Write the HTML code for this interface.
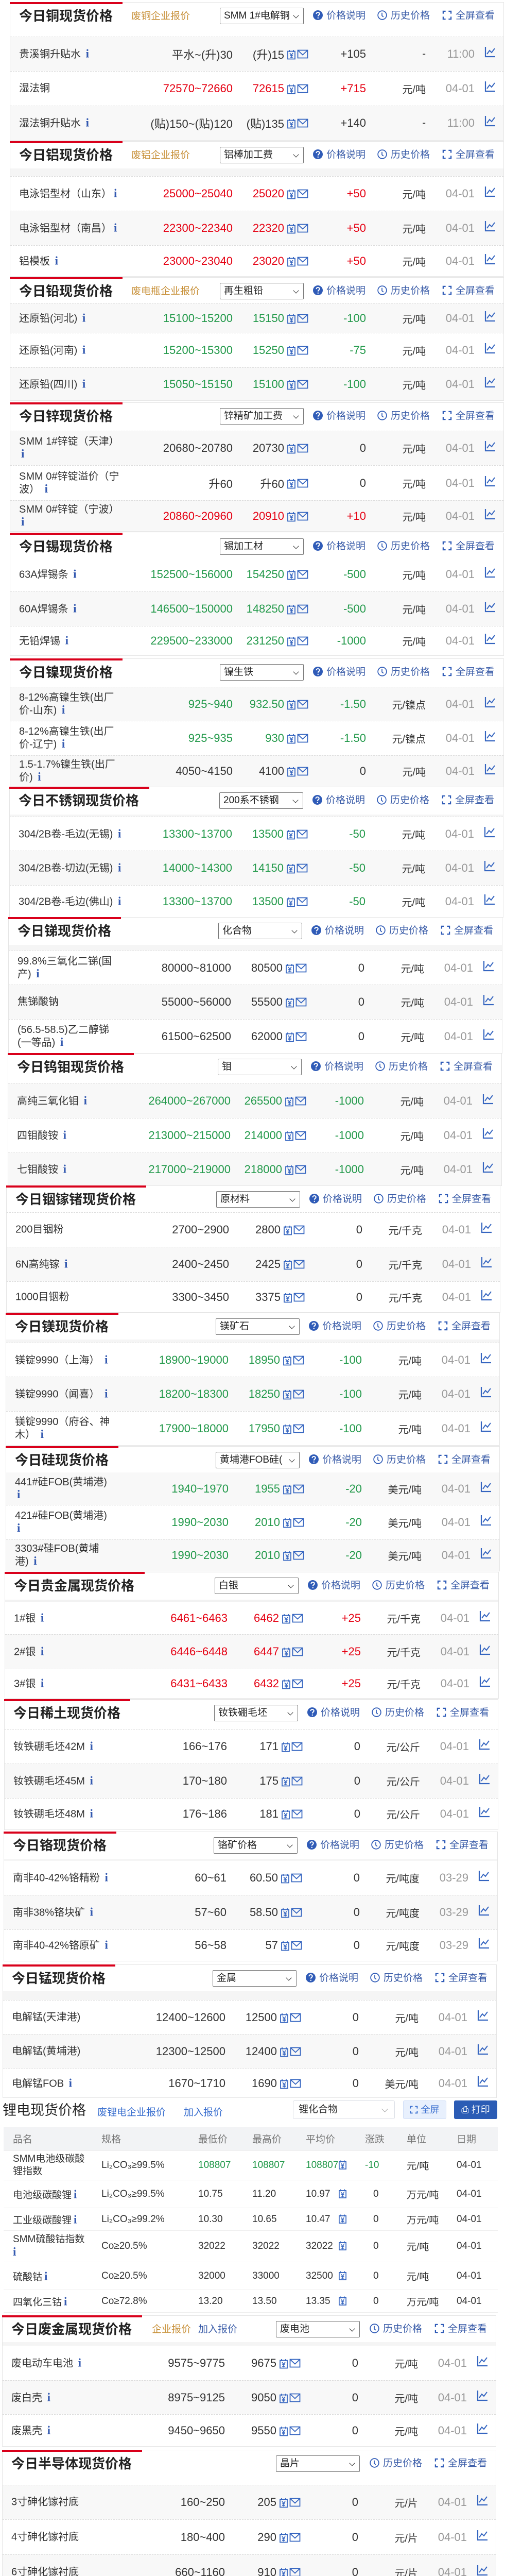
<!DOCTYPE html>
<html><head><meta charset="utf-8">
<style>
*{box-sizing:border-box}
html,body{margin:0;width:981px;height:5028px;overflow:hidden}
body{position:relative;background:#fff;font-family:"Liberation Sans","Noto Sans CJK SC",sans-serif;color:#333}
.s{position:absolute;width:960px;border:1px solid #e6e6e6;border-top:none;background:#fff}
.h{position:relative;border-top:1px solid #e6e6e6}
.bar{position:absolute;left:-1px;top:-1px;height:4px;background:#d9001b}
.t{position:absolute;left:17px;top:11px;font-weight:bold;font-size:26px;line-height:30px;color:#222;white-space:nowrap}
.sub{position:absolute;left:235px;top:15px;font-size:19px;line-height:24px;color:#c8913a;white-space:nowrap}
.sub b{font-weight:normal;color:#3a5ca8;margin-left:14px}
.sel{position:absolute;left:407px;top:10px;width:163px;height:32px;border:1px solid #767676;border-radius:2px;font-size:19px;line-height:30px;padding-left:7px;color:#222;white-space:nowrap;overflow:hidden;background:#fff}
.sel:after{content:"";position:absolute;right:10px;top:10px;width:7px;height:7px;border-right:1.6px solid #333;border-bottom:1.6px solid #333;transform:rotate(45deg)}
.sel span{display:block;width:130px;overflow:hidden}
.lk{position:absolute;top:14px;font-size:19px;line-height:24px;color:#3a5ca8;white-space:nowrap}
.lk svg{width:19px;height:19px;vertical-align:-3px;margin-right:7px}
.st{background:#f5f5f5}
.r{position:relative;border-top:1px dashed #dcdcdc}
.g{background:#f8f8f8}
.r p{position:absolute;margin:0;top:50%;transform:translateY(-50%);white-space:nowrap;font-size:22px}
.r p.n{left:17px;width:205px;white-space:normal;font-size:20px;line-height:23px}
i{font-style:normal;font-family:"Liberation Serif",serif;font-weight:bold;color:#3359b0;font-size:23px;margin-left:4px}
.a{right:526px}.v{right:426px}.c{right:267px}.u{right:151px;font-size:20px!important}.d{right:56px;color:#999}
.R .a,.R .v,.R .c{color:#e50012}
.G .a,.G .v,.G .c{color:#22994a}
.r svg{position:absolute;top:50%}
.y{left:537px;width:18px;height:20px;margin-top:-9px}
.m{left:557px;width:22px;height:18px;margin-top:-9px}
.k{left:921px;width:22px;height:22px;margin-top:-15px}
.li{position:absolute;left:4px;top:4071px;width:963px;height:418px}
.li .lt{position:absolute;left:1px;top:9px;font-size:27px;line-height:32px;color:#222}
.li .l1{position:absolute;left:185px;top:14px;font-size:19px;color:#3a6fcf}
.li .l2{position:absolute;left:353px;top:14px;font-size:19px;color:#3a6fcf}
.li .ls{position:absolute;left:565px;top:6px;width:198px;height:36px;border:1px solid #dcdfe6;border-radius:3px;font-size:19px;line-height:34px;padding-left:10px;color:#333}
.li .ls:after{content:"";position:absolute;right:14px;top:11px;width:8px;height:8px;border-right:1px solid #aaa;border-bottom:1px solid #aaa;transform:rotate(45deg)}
.li .fb{position:absolute;left:779px;top:6px;width:84px;height:36px;background:#e8f0fd;border:1px solid #d0def7;border-radius:3px;color:#3a6fcf;font-size:18px;line-height:34px;text-align:center}
.li .pb{position:absolute;left:878px;top:6px;width:84px;height:36px;background:#2b5cb5;border-radius:3px;color:#fff;font-size:18px;line-height:36px;text-align:center}
.tb{position:absolute;left:3px;top:57px;width:960px}
.tr{position:relative;border-bottom:1px solid #eee}
.tr p{position:absolute;margin:0;top:50%;transform:translateY(-50%);white-space:nowrap;font-size:19px}
.th{background:#f2f3f5;height:47px}.th p{color:#777}
.tr p.n1{left:18px;width:145px;white-space:normal;line-height:24px}
.c1{left:18px}.c2{left:190px}.c3{left:378px}.c4{left:483px}.c5{left:587px}.c6{left:702px}.c7{left:783px}.c8{left:880px}
.gr{color:#22994a}
.tr svg{position:absolute;top:50%;left:650px;width:17px;height:20px;margin-top:-11px}
</style></head><body>
<svg width="0" height="0" style="position:absolute">
<defs>
<symbol id="y" viewBox="0 0 18 20"><path d="M2 3.5h14v15H2z M5 1v4 M13 1v4" fill="none" stroke="#3565c0" stroke-width="1.8"/><path d="M6 7l3 4 3-4 M9 11v6 M6 12h6 M6 15h6" fill="none" stroke="#3565c0" stroke-width="1.6"/></symbol>
<symbol id="m" viewBox="0 0 22 18"><path d="M1.5 1.5h19v15h-19z M1.5 1.5l9.5 9 9.5-9" fill="none" stroke="#3565c0" stroke-width="1.8"/></symbol>
<symbol id="k" viewBox="0 0 22 22"><path d="M2 1v19h19" fill="none" stroke="#3565c0" stroke-width="2.2"/><path d="M5 15l5-7 4 4 6-8" fill="none" stroke="#3565c0" stroke-width="2"/></symbol>
<symbol id="q" viewBox="0 0 20 20"><circle cx="10" cy="10" r="10" fill="#2f5bb7"/><path d="M6.8 7.5c0-2 1.5-3.3 3.3-3.3s3.3 1.2 3.3 3c0 2.4-3 2.4-3 5" fill="none" stroke="#fff" stroke-width="2.2"/><circle cx="10.3" cy="15.6" r="1.3" fill="#fff"/></symbol>
<symbol id="cl" viewBox="0 0 20 20"><circle cx="10" cy="10" r="8.8" fill="none" stroke="#2f5bb7" stroke-width="1.8"/><path d="M9.5 5v6l3 2.5" fill="none" stroke="#2f5bb7" stroke-width="1.8"/></symbol>
<symbol id="fs" viewBox="0 0 20 20"><path d="M2 7V2h5 M13 2h5v5 M18 13v5h-5 M7 18H2v-5" fill="none" stroke="#2f5bb7" stroke-width="2.4"/></symbol>
</defs></svg>

<div class="s" style="left:19px;top:4px">
<div class="h" style="height:67px"><div class="bar" style="width:219px"></div><div class="t">今日铜现货价格</div><div class="sub">废铜企业报价</div><div class="sel"><span>SMM 1#电解铜</span></div><div class="lk" style="left:588px"><svg><use href="#q"/></svg>价格说明</div><div class="lk" style="left:713px"><svg><use href="#cl"/></svg>历史价格</div><div class="lk" style="left:839px"><svg><use href="#fs"/></svg>全屏查看</div></div>
<div class="r g" style="height:67px"><p class="n">贵溪铜升贴水 <i>i</i></p><p class="a">平水~(升)30</p><p class="v">(升)15</p><svg class="y"><use href="#y"/></svg><svg class="m"><use href="#m"/></svg><p class="c">+105</p><p class="u">-</p><p class="d">11:00</p><svg class="k"><use href="#k"/></svg></div>
<div class="r R" style="height:67px"><p class="n">湿法铜</p><p class="a">72570~72660</p><p class="v">72615</p><svg class="y"><use href="#y"/></svg><svg class="m"><use href="#m"/></svg><p class="c">+715</p><p class="u">元/吨</p><p class="d">04-01</p><svg class="k"><use href="#k"/></svg></div>
<div class="r g" style="height:67px"><p class="n">湿法铜升贴水 <i>i</i></p><p class="a">(贴)150~(贴)120</p><p class="v">(贴)135</p><svg class="y"><use href="#y"/></svg><svg class="m"><use href="#m"/></svg><p class="c">+140</p><p class="u">-</p><p class="d">11:00</p><svg class="k"><use href="#k"/></svg></div>
</div>

<div class="s" style="left:19px;top:274px">
<div class="h" style="height:53px"><div class="bar" style="width:219px"></div><div class="t">今日铝现货价格</div><div class="sub">废铝企业报价</div><div class="sel"><span>铝棒加工费</span></div><div class="lk" style="left:588px"><svg><use href="#q"/></svg>价格说明</div><div class="lk" style="left:713px"><svg><use href="#cl"/></svg>历史价格</div><div class="lk" style="left:839px"><svg><use href="#fs"/></svg>全屏查看</div></div>
<div class="st" style="height:15px"></div>
<div class="r R" style="height:67px"><p class="n">电泳铝型材（山东）<i>i</i></p><p class="a">25000~25040</p><p class="v">25020</p><svg class="y"><use href="#y"/></svg><svg class="m"><use href="#m"/></svg><p class="c">+50</p><p class="u">元/吨</p><p class="d">04-01</p><svg class="k"><use href="#k"/></svg></div>
<div class="r R g" style="height:67px"><p class="n">电泳铝型材（南昌）<i>i</i></p><p class="a">22300~22340</p><p class="v">22320</p><svg class="y"><use href="#y"/></svg><svg class="m"><use href="#m"/></svg><p class="c">+50</p><p class="u">元/吨</p><p class="d">04-01</p><svg class="k"><use href="#k"/></svg></div>
<div class="r R" style="height:60px"><p class="n">铝模板 <i>i</i></p><p class="a">23000~23040</p><p class="v">23020</p><svg class="y"><use href="#y"/></svg><svg class="m"><use href="#m"/></svg><p class="c">+50</p><p class="u">元/吨</p><p class="d">04-01</p><svg class="k"><use href="#k"/></svg></div>
</div>

<div class="s" style="left:19px;top:538px">
<div class="h" style="height:51px"><div class="bar" style="width:219px"></div><div class="t">今日铅现货价格</div><div class="sub">废电瓶企业报价</div><div class="sel"><span>再生粗铅</span></div><div class="lk" style="left:588px"><svg><use href="#q"/></svg>价格说明</div><div class="lk" style="left:713px"><svg><use href="#cl"/></svg>历史价格</div><div class="lk" style="left:839px"><svg><use href="#fs"/></svg>全屏查看</div></div>
<div class="r G g" style="height:57px"><p class="n">还原铅(河北) <i>i</i></p><p class="a">15100~15200</p><p class="v">15150</p><svg class="y"><use href="#y"/></svg><svg class="m"><use href="#m"/></svg><p class="c">-100</p><p class="u">元/吨</p><p class="d">04-01</p><svg class="k"><use href="#k"/></svg></div>
<div class="r G" style="height:67px"><p class="n">还原铅(河南) <i>i</i></p><p class="a">15200~15300</p><p class="v">15250</p><svg class="y"><use href="#y"/></svg><svg class="m"><use href="#m"/></svg><p class="c">-75</p><p class="u">元/吨</p><p class="d">04-01</p><svg class="k"><use href="#k"/></svg></div>
<div class="r G g" style="height:64px"><p class="n">还原铅(四川) <i>i</i></p><p class="a">15050~15150</p><p class="v">15100</p><svg class="y"><use href="#y"/></svg><svg class="m"><use href="#m"/></svg><p class="c">-100</p><p class="u">元/吨</p><p class="d">04-01</p><svg class="k"><use href="#k"/></svg></div>
</div>

<div class="s" style="left:19px;top:781px">
<div class="h" style="height:55px"><div class="bar" style="width:219px"></div><div class="t">今日锌现货价格</div><div class="sel"><span>锌精矿加工费</span></div><div class="lk" style="left:588px"><svg><use href="#q"/></svg>价格说明</div><div class="lk" style="left:713px"><svg><use href="#cl"/></svg>历史价格</div><div class="lk" style="left:839px"><svg><use href="#fs"/></svg>全屏查看</div></div>
<div class="r g" style="height:67px"><p class="n">SMM 1#锌锭（天津） <i>i</i></p><p class="a">20680~20780</p><p class="v">20730</p><svg class="y"><use href="#y"/></svg><svg class="m"><use href="#m"/></svg><p class="c">0</p><p class="u">元/吨</p><p class="d">04-01</p><svg class="k"><use href="#k"/></svg></div>
<div class="r" style="height:68px"><p class="n">SMM 0#锌锭溢价（宁波） <i>i</i></p><p class="a">升60</p><p class="v">升60</p><svg class="y"><use href="#y"/></svg><svg class="m"><use href="#m"/></svg><p class="c">0</p><p class="u">元/吨</p><p class="d">04-01</p><svg class="k"><use href="#k"/></svg></div>
<div class="r R g" style="height:60px"><p class="n">SMM 0#锌锭（宁波） <i>i</i></p><p class="a">20860~20960</p><p class="v">20910</p><svg class="y"><use href="#y"/></svg><svg class="m"><use href="#m"/></svg><p class="c">+10</p><p class="u">元/吨</p><p class="d">04-01</p><svg class="k"><use href="#k"/></svg></div>
</div>

<div class="s" style="left:19px;top:1034px">
<div class="h" style="height:47px"><div class="bar" style="width:219px"></div><div class="t">今日锡现货价格</div><div class="sel"><span>锡加工材</span></div><div class="lk" style="left:588px"><svg><use href="#q"/></svg>价格说明</div><div class="lk" style="left:713px"><svg><use href="#cl"/></svg>历史价格</div><div class="lk" style="left:839px"><svg><use href="#fs"/></svg>全屏查看</div></div>
<div class="r G" style="height:67px;border-top:none"><p class="n">63A焊锡条 <i>i</i></p><p class="a">152500~156000</p><p class="v">154250</p><svg class="y"><use href="#y"/></svg><svg class="m"><use href="#m"/></svg><p class="c">-500</p><p class="u">元/吨</p><p class="d">04-01</p><svg class="k"><use href="#k"/></svg></div>
<div class="r G g" style="height:67px"><p class="n">60A焊锡条 <i>i</i></p><p class="a">146500~150000</p><p class="v">148250</p><svg class="y"><use href="#y"/></svg><svg class="m"><use href="#m"/></svg><p class="c">-500</p><p class="u">元/吨</p><p class="d">04-01</p><svg class="k"><use href="#k"/></svg></div>
<div class="r G" style="height:57px"><p class="n">无铅焊锡 <i>i</i></p><p class="a">229500~233000</p><p class="v">231250</p><svg class="y"><use href="#y"/></svg><svg class="m"><use href="#m"/></svg><p class="c">-1000</p><p class="u">元/吨</p><p class="d">04-01</p><svg class="k"><use href="#k"/></svg></div>
</div>

<div class="s" style="left:19px;top:1278px">
<div class="h" style="height:55px"><div class="bar" style="width:219px"></div><div class="t">今日镍现货价格</div><div class="sel"><span>镍生铁</span></div><div class="lk" style="left:588px"><svg><use href="#q"/></svg>价格说明</div><div class="lk" style="left:713px"><svg><use href="#cl"/></svg>历史价格</div><div class="lk" style="left:839px"><svg><use href="#fs"/></svg>全屏查看</div></div>
<div class="r G g" style="height:66px"><p class="n" style="width:190px">8-12%高镍生铁(出厂价-山东) <i>i</i></p><p class="a">925~940</p><p class="v">932.50</p><svg class="y"><use href="#y"/></svg><svg class="m"><use href="#m"/></svg><p class="c">-1.50</p><p class="u">元/镍点</p><p class="d">04-01</p><svg class="k"><use href="#k"/></svg></div>
<div class="r G" style="height:67px"><p class="n" style="width:190px">8-12%高镍生铁(出厂价-辽宁) <i>i</i></p><p class="a">925~935</p><p class="v">930</p><svg class="y"><use href="#y"/></svg><svg class="m"><use href="#m"/></svg><p class="c">-1.50</p><p class="u">元/镍点</p><p class="d">04-01</p><svg class="k"><use href="#k"/></svg></div>
<div class="r g" style="height:61px"><p class="n" style="width:190px">1.5-1.7%镍生铁(出厂价) <i>i</i></p><p class="a">4050~4150</p><p class="v">4100</p><svg class="y"><use href="#y"/></svg><svg class="m"><use href="#m"/></svg><p class="c">0</p><p class="u">元/吨</p><p class="d">04-01</p><svg class="k"><use href="#k"/></svg></div>
</div>

<div class="s" style="left:18px;top:1527px">
<div class="h" style="height:54px"><div class="bar" style="width:272px"></div><div class="t">今日不锈钢现货价格</div><div class="sel"><span>200系不锈钢</span></div><div class="lk" style="left:588px"><svg><use href="#q"/></svg>价格说明</div><div class="lk" style="left:713px"><svg><use href="#cl"/></svg>历史价格</div><div class="lk" style="left:839px"><svg><use href="#fs"/></svg>全屏查看</div></div>
<div class="st" style="height:4px"></div>
<div class="r G" style="height:66px"><p class="n">304/2B卷-毛边(无锡) <i>i</i></p><p class="a">13300~13700</p><p class="v">13500</p><svg class="y"><use href="#y"/></svg><svg class="m"><use href="#m"/></svg><p class="c">-50</p><p class="u">元/吨</p><p class="d">04-01</p><svg class="k"><use href="#k"/></svg></div>
<div class="r G g" style="height:67px"><p class="n">304/2B卷-切边(无锡) <i>i</i></p><p class="a">14000~14300</p><p class="v">14150</p><svg class="y"><use href="#y"/></svg><svg class="m"><use href="#m"/></svg><p class="c">-50</p><p class="u">元/吨</p><p class="d">04-01</p><svg class="k"><use href="#k"/></svg></div>
<div class="r G" style="height:62px"><p class="n">304/2B卷-毛边(佛山) <i>i</i></p><p class="a">13300~13700</p><p class="v">13500</p><svg class="y"><use href="#y"/></svg><svg class="m"><use href="#m"/></svg><p class="c">-50</p><p class="u">元/吨</p><p class="d">04-01</p><svg class="k"><use href="#k"/></svg></div>
</div>

<div class="s" style="left:16px;top:1780px">
<div class="h" style="height:54px"><div class="bar" style="width:219px"></div><div class="t">今日锑现货价格</div><div class="sel"><span>化合物</span></div><div class="lk" style="left:588px"><svg><use href="#q"/></svg>价格说明</div><div class="lk" style="left:713px"><svg><use href="#cl"/></svg>历史价格</div><div class="lk" style="left:839px"><svg><use href="#fs"/></svg>全屏查看</div></div>
<div class="st" style="height:11px"></div>
<div class="r" style="height:66px"><p class="n" style="width:190px">99.8%三氧化二锑(国产) <i>i</i></p><p class="a">80000~81000</p><p class="v">80500</p><svg class="y"><use href="#y"/></svg><svg class="m"><use href="#m"/></svg><p class="c">0</p><p class="u">元/吨</p><p class="d">04-01</p><svg class="k"><use href="#k"/></svg></div>
<div class="r g" style="height:67px"><p class="n">焦锑酸钠</p><p class="a">55000~56000</p><p class="v">55500</p><svg class="y"><use href="#y"/></svg><svg class="m"><use href="#m"/></svg><p class="c">0</p><p class="u">元/吨</p><p class="d">04-01</p><svg class="k"><use href="#k"/></svg></div>
<div class="r" style="height:66px"><p class="n" style="width:185px">(56.5-58.5)乙二醇锑(一等品) <i>i</i></p><p class="a">61500~62500</p><p class="v">62000</p><svg class="y"><use href="#y"/></svg><svg class="m"><use href="#m"/></svg><p class="c">0</p><p class="u">元/吨</p><p class="d">04-01</p><svg class="k"><use href="#k"/></svg></div>
</div>

<div class="s" style="left:15px;top:2044px">
<div class="h" style="height:59px"><div class="bar" style="width:245px"></div><div class="t">今日钨钼现货价格</div><div class="sel"><span>钼</span></div><div class="lk" style="left:588px"><svg><use href="#q"/></svg>价格说明</div><div class="lk" style="left:713px"><svg><use href="#cl"/></svg>历史价格</div><div class="lk" style="left:839px"><svg><use href="#fs"/></svg>全屏查看</div></div>
<div class="r G g" style="height:67px"><p class="n">高纯三氧化钼 <i>i</i></p><p class="a">264000~267000</p><p class="v">265500</p><svg class="y"><use href="#y"/></svg><svg class="m"><use href="#m"/></svg><p class="c">-1000</p><p class="u">元/吨</p><p class="d">04-01</p><svg class="k"><use href="#k"/></svg></div>
<div class="r G" style="height:67px"><p class="n">四钼酸铵 <i>i</i></p><p class="a">213000~215000</p><p class="v">214000</p><svg class="y"><use href="#y"/></svg><svg class="m"><use href="#m"/></svg><p class="c">-1000</p><p class="u">元/吨</p><p class="d">04-01</p><svg class="k"><use href="#k"/></svg></div>
<div class="r G g" style="height:64px"><p class="n">七钼酸铵 <i>i</i></p><p class="a">217000~219000</p><p class="v">218000</p><svg class="y"><use href="#y"/></svg><svg class="m"><use href="#m"/></svg><p class="c">-1000</p><p class="u">元/吨</p><p class="d">04-01</p><svg class="k"><use href="#k"/></svg></div>
</div>

<div class="s" style="left:12px;top:2301px">
<div class="h" style="height:52px"><div class="bar" style="width:272px"></div><div class="t">今日铟镓锗现货价格</div><div class="sel"><span>原材料</span></div><div class="lk" style="left:588px"><svg><use href="#q"/></svg>价格说明</div><div class="lk" style="left:713px"><svg><use href="#cl"/></svg>历史价格</div><div class="lk" style="left:839px"><svg><use href="#fs"/></svg>全屏查看</div></div>
<div class="r" style="height:67px"><p class="n">200目铟粉</p><p class="a">2700~2900</p><p class="v">2800</p><svg class="y"><use href="#y"/></svg><svg class="m"><use href="#m"/></svg><p class="c">0</p><p class="u">元/千克</p><p class="d">04-01</p><svg class="k"><use href="#k"/></svg></div>
<div class="r g" style="height:67px"><p class="n">6N高纯镓 <i>i</i></p><p class="a">2400~2450</p><p class="v">2425</p><svg class="y"><use href="#y"/></svg><svg class="m"><use href="#m"/></svg><p class="c">0</p><p class="u">元/千克</p><p class="d">04-01</p><svg class="k"><use href="#k"/></svg></div>
<div class="r" style="height:60px"><p class="n">1000目铟粉</p><p class="a">3300~3450</p><p class="v">3375</p><svg class="y"><use href="#y"/></svg><svg class="m"><use href="#m"/></svg><p class="c">0</p><p class="u">元/千克</p><p class="d">04-01</p><svg class="k"><use href="#k"/></svg></div>
</div>

<div class="s" style="left:11px;top:2548px">
<div class="h" style="height:52px"><div class="bar" style="width:219px"></div><div class="t">今日镁现货价格</div><div class="sel"><span>镁矿石</span></div><div class="lk" style="left:588px"><svg><use href="#q"/></svg>价格说明</div><div class="lk" style="left:713px"><svg><use href="#cl"/></svg>历史价格</div><div class="lk" style="left:839px"><svg><use href="#fs"/></svg>全屏查看</div></div>
<div class="st" style="height:6px"></div>
<div class="r G" style="height:66px"><p class="n">镁锭9990（上海） <i>i</i></p><p class="a">18900~19000</p><p class="v">18950</p><svg class="y"><use href="#y"/></svg><svg class="m"><use href="#m"/></svg><p class="c">-100</p><p class="u">元/吨</p><p class="d">04-01</p><svg class="k"><use href="#k"/></svg></div>
<div class="r G g" style="height:67px"><p class="n">镁锭9990（闻喜） <i>i</i></p><p class="a">18200~18300</p><p class="v">18250</p><svg class="y"><use href="#y"/></svg><svg class="m"><use href="#m"/></svg><p class="c">-100</p><p class="u">元/吨</p><p class="d">04-01</p><svg class="k"><use href="#k"/></svg></div>
<div class="r G" style="height:66px"><p class="n" style="width:190px">镁锭9990（府谷、神木） <i>i</i></p><p class="a">17900~18000</p><p class="v">17950</p><svg class="y"><use href="#y"/></svg><svg class="m"><use href="#m"/></svg><p class="c">-100</p><p class="u">元/吨</p><p class="d">04-01</p><svg class="k"><use href="#k"/></svg></div>
</div>

<div class="s" style="left:11px;top:2807px">
<div class="h" style="height:51px"><div class="bar" style="width:219px"></div><div class="t">今日硅现货价格</div><div class="sel"><span>黄埔港FOB硅(</span></div><div class="lk" style="left:588px"><svg><use href="#q"/></svg>价格说明</div><div class="lk" style="left:713px"><svg><use href="#cl"/></svg>历史价格</div><div class="lk" style="left:839px"><svg><use href="#fs"/></svg>全屏查看</div></div>
<div class="r G g" style="height:63px;border-top:none"><p class="n" style="width:190px">441#硅FOB(黄埔港) <i>i</i></p><p class="a">1940~1970</p><p class="v">1955</p><svg class="y"><use href="#y"/></svg><svg class="m"><use href="#m"/></svg><p class="c">-20</p><p class="u">美元/吨</p><p class="d">04-01</p><svg class="k"><use href="#k"/></svg></div>
<div class="r G" style="height:67px"><p class="n" style="width:190px">421#硅FOB(黄埔港) <i>i</i></p><p class="a">1990~2030</p><p class="v">2010</p><svg class="y"><use href="#y"/></svg><svg class="m"><use href="#m"/></svg><p class="c">-20</p><p class="u">美元/吨</p><p class="d">04-01</p><svg class="k"><use href="#k"/></svg></div>
<div class="r G g" style="height:61px"><p class="n" style="width:190px">3303#硅FOB(黄埔港) <i>i</i></p><p class="a">1990~2030</p><p class="v">2010</p><svg class="y"><use href="#y"/></svg><svg class="m"><use href="#m"/></svg><p class="c">-20</p><p class="u">美元/吨</p><p class="d">04-01</p><svg class="k"><use href="#k"/></svg></div>
</div>

<div class="s" style="left:9px;top:3051px">
<div class="h" style="height:54px"><div class="bar" style="width:272px"></div><div class="t">今日贵金属现货价格</div><div class="sel"><span>白银</span></div><div class="lk" style="left:588px"><svg><use href="#q"/></svg>价格说明</div><div class="lk" style="left:713px"><svg><use href="#cl"/></svg>历史价格</div><div class="lk" style="left:839px"><svg><use href="#fs"/></svg>全屏查看</div></div>
<div class="r R" style="height:67px;border-top:4px solid #f2f2f2"><p class="n">1#银 <i>i</i></p><p class="a">6461~6463</p><p class="v">6462</p><svg class="y"><use href="#y"/></svg><svg class="m"><use href="#m"/></svg><p class="c">+25</p><p class="u">元/千克</p><p class="d">04-01</p><svg class="k"><use href="#k"/></svg></div>
<div class="r R g" style="height:67px"><p class="n">2#银 <i>i</i></p><p class="a">6446~6448</p><p class="v">6447</p><svg class="y"><use href="#y"/></svg><svg class="m"><use href="#m"/></svg><p class="c">+25</p><p class="u">元/千克</p><p class="d">04-01</p><svg class="k"><use href="#k"/></svg></div>
<div class="r R" style="height:57px"><p class="n">3#银 <i>i</i></p><p class="a">6431~6433</p><p class="v">6432</p><svg class="y"><use href="#y"/></svg><svg class="m"><use href="#m"/></svg><p class="c">+25</p><p class="u">元/千克</p><p class="d">04-01</p><svg class="k"><use href="#k"/></svg></div>
</div>

<div class="s" style="left:8px;top:3298px">
<div class="h" style="height:58px"><div class="bar" style="width:245px"></div><div class="t">今日稀土现货价格</div><div class="sel"><span>钕铁硼毛坯</span></div><div class="lk" style="left:588px"><svg><use href="#q"/></svg>价格说明</div><div class="lk" style="left:713px"><svg><use href="#cl"/></svg>历史价格</div><div class="lk" style="left:839px"><svg><use href="#fs"/></svg>全屏查看</div></div>
<div class="r" style="height:67px"><p class="n">钕铁硼毛坯42M <i>i</i></p><p class="a">166~176</p><p class="v">171</p><svg class="y"><use href="#y"/></svg><svg class="m"><use href="#m"/></svg><p class="c">0</p><p class="u">元/公斤</p><p class="d">04-01</p><svg class="k"><use href="#k"/></svg></div>
<div class="r g" style="height:67px"><p class="n">钕铁硼毛坯45M <i>i</i></p><p class="a">170~180</p><p class="v">175</p><svg class="y"><use href="#y"/></svg><svg class="m"><use href="#m"/></svg><p class="c">0</p><p class="u">元/公斤</p><p class="d">04-01</p><svg class="k"><use href="#k"/></svg></div>
<div class="r" style="height:61px"><p class="n">钕铁硼毛坯48M <i>i</i></p><p class="a">176~186</p><p class="v">181</p><svg class="y"><use href="#y"/></svg><svg class="m"><use href="#m"/></svg><p class="c">0</p><p class="u">元/公斤</p><p class="d">04-01</p><svg class="k"><use href="#k"/></svg></div>
</div>

<div class="s" style="left:7px;top:3555px">
<div class="h" style="height:53px"><div class="bar" style="width:219px"></div><div class="t">今日铬现货价格</div><div class="sel"><span>铬矿价格</span></div><div class="lk" style="left:588px"><svg><use href="#q"/></svg>价格说明</div><div class="lk" style="left:713px"><svg><use href="#cl"/></svg>历史价格</div><div class="lk" style="left:839px"><svg><use href="#fs"/></svg>全屏查看</div></div>
<div class="st" style="height:4px"></div>
<div class="r" style="height:66px;border-top:none"><p class="n">南非40-42%铬精粉 <i>i</i></p><p class="a">60~61</p><p class="v">60.50</p><svg class="y"><use href="#y"/></svg><svg class="m"><use href="#m"/></svg><p class="c">0</p><p class="u">元/吨度</p><p class="d">03-29</p><svg class="k"><use href="#k"/></svg></div>
<div class="r g" style="height:67px"><p class="n">南非38%铬块矿 <i>i</i></p><p class="a">57~60</p><p class="v">58.50</p><svg class="y"><use href="#y"/></svg><svg class="m"><use href="#m"/></svg><p class="c">0</p><p class="u">元/吨度</p><p class="d">03-29</p><svg class="k"><use href="#k"/></svg></div>
<div class="r" style="height:61px"><p class="n">南非40-42%铬原矿 <i>i</i></p><p class="a">56~58</p><p class="v">57</p><svg class="y"><use href="#y"/></svg><svg class="m"><use href="#m"/></svg><p class="c">0</p><p class="u">元/吨度</p><p class="d">03-29</p><svg class="k"><use href="#k"/></svg></div>
</div>

<div class="s" style="left:5px;top:3813px">
<div class="h" style="height:52px"><div class="bar" style="width:219px"></div><div class="t">今日锰现货价格</div><div class="sel"><span>金属</span></div><div class="lk" style="left:588px"><svg><use href="#q"/></svg>价格说明</div><div class="lk" style="left:713px"><svg><use href="#cl"/></svg>历史价格</div><div class="lk" style="left:839px"><svg><use href="#fs"/></svg>全屏查看</div></div>
<div class="st" style="height:17px"></div>
<div class="r" style="height:66px"><p class="n">电解锰(天津港)</p><p class="a">12400~12600</p><p class="v">12500</p><svg class="y"><use href="#y"/></svg><svg class="m"><use href="#m"/></svg><p class="c">0</p><p class="u">元/吨</p><p class="d">04-01</p><svg class="k"><use href="#k"/></svg></div>
<div class="r g" style="height:67px"><p class="n">电解锰(黄埔港)</p><p class="a">12300~12500</p><p class="v">12400</p><svg class="y"><use href="#y"/></svg><svg class="m"><use href="#m"/></svg><p class="c">0</p><p class="u">元/吨</p><p class="d">04-01</p><svg class="k"><use href="#k"/></svg></div>
<div class="r" style="height:56px"><p class="n">电解锰FOB <i>i</i></p><p class="a">1670~1710</p><p class="v">1690</p><svg class="y"><use href="#y"/></svg><svg class="m"><use href="#m"/></svg><p class="c">0</p><p class="u">美元/吨</p><p class="d">04-01</p><svg class="k"><use href="#k"/></svg></div>
</div>

<div class="li">
<div class="lt">锂电现货价格</div><div class="l1">废锂电企业报价</div><div class="l2">加入报价</div>
<div class="ls">锂化合物</div><div class="fb"><svg style="width:16px;height:16px;vertical-align:-2px" viewBox="0 0 20 20"><path d="M2 7V2h5 M13 2h5v5 M18 13v5h-5 M7 18H2v-5" fill="none" stroke="#3a6fcf" stroke-width="2.4"/></svg> 全屏</div><div class="pb">⎙ 打印</div>
<div class="tb">
<div class="tr th"><p class="c1">品名</p><p class="c2">规格</p><p class="c3">最低价</p><p class="c4">最高价</p><p class="c5">平均价</p><p class="c6">涨跌</p><p class="c7">单位</p><p class="c8">日期</p></div>
<div class="tr" style="height:57px"><p class="n1">SMM电池级碳酸锂指数</p><p class="c2">Li₂CO₃≥99.5%</p><p class="c3 gr">108807</p><p class="c4 gr">108807</p><p class="c5 gr">108807</p><svg><use href="#y"/></svg><p class="c6 gr">-10</p><p class="c7">元/吨</p><p class="c8">04-01</p></div>
<div class="tr" style="height:54px"><p class="c1">电池级碳酸锂<i>i</i></p><p class="c2">Li₂CO₃≥99.5%</p><p class="c3">10.75</p><p class="c4">11.20</p><p class="c5">10.97</p><svg><use href="#y"/></svg><p class="c6" style="left:718px">0</p><p class="c7">万元/吨</p><p class="c8">04-01</p></div>
<div class="tr" style="height:44px"><p class="c1">工业级碳酸锂<i>i</i></p><p class="c2">Li₂CO₃≥99.2%</p><p class="c3">10.30</p><p class="c4">10.65</p><p class="c5">10.47</p><svg><use href="#y"/></svg><p class="c6" style="left:718px">0</p><p class="c7">万元/吨</p><p class="c8">04-01</p></div>
<div class="tr" style="height:61px"><p class="n1">SMM硫酸钴指数<br><i style="margin:0">i</i></p><p class="c2">Co≥20.5%</p><p class="c3">32022</p><p class="c4">32022</p><p class="c5">32022</p><svg><use href="#y"/></svg><p class="c6" style="left:718px">0</p><p class="c7">元/吨</p><p class="c8">04-01</p></div>
<div class="tr" style="height:54px"><p class="c1">硫酸钴<i>i</i></p><p class="c2">Co≥20.5%</p><p class="c3">32000</p><p class="c4">33000</p><p class="c5">32500</p><svg><use href="#y"/></svg><p class="c6" style="left:718px">0</p><p class="c7">元/吨</p><p class="c8">04-01</p></div>
<div class="tr" style="height:44px"><p class="c1">四氧化三钴<i>i</i></p><p class="c2">Co≥72.8%</p><p class="c3">13.20</p><p class="c4">13.50</p><p class="c5">13.35</p><svg><use href="#y"/></svg><p class="c6" style="left:718px">0</p><p class="c7">万元/吨</p><p class="c8">04-01</p></div>
</div>
</div>

<div class="s" style="left:4px;top:4494px">
<div class="h" style="height:52px"><div class="bar" style="width:272px"></div><div class="t">今日废金属现货价格</div><div class="sub" style="left:290px">企业报价<b>加入报价</b></div><div class="sel" style="left:531px"><span>废电池</span></div><div class="lk" style="left:713px"><svg><use href="#cl"/></svg>历史价格</div><div class="lk" style="left:839px"><svg><use href="#fs"/></svg>全屏查看</div></div>
<div class="st" style="height:7px"></div>
<div class="r" style="height:67px;border-top:none"><p class="n">废电动车电池 <i>i</i></p><p class="a">9575~9775</p><p class="v">9675</p><svg class="y"><use href="#y"/></svg><svg class="m"><use href="#m"/></svg><p class="c">0</p><p class="u">元/吨</p><p class="d">04-01</p><svg class="k"><use href="#k"/></svg></div>
<div class="r g" style="height:66px"><p class="n">废白壳 <i>i</i></p><p class="a">8975~9125</p><p class="v">9050</p><svg class="y"><use href="#y"/></svg><svg class="m"><use href="#m"/></svg><p class="c">0</p><p class="u">元/吨</p><p class="d">04-01</p><svg class="k"><use href="#k"/></svg></div>
<div class="r" style="height:62px"><p class="n">废黑壳 <i>i</i></p><p class="a">9450~9650</p><p class="v">9550</p><svg class="y"><use href="#y"/></svg><svg class="m"><use href="#m"/></svg><p class="c">0</p><p class="u">元/吨</p><p class="d">04-01</p><svg class="k"><use href="#k"/></svg></div>
</div>

<div class="s" style="left:4px;top:4755px">
<div class="h" style="height:68px"><div class="bar" style="width:272px"></div><div class="t">今日半导体现货价格</div><div class="sel" style="left:531px"><span>晶片</span></div><div class="lk" style="left:713px"><svg><use href="#cl"/></svg>历史价格</div><div class="lk" style="left:839px"><svg><use href="#fs"/></svg>全屏查看</div></div>
<div class="r g" style="height:67px"><p class="n">3寸砷化镓衬底</p><p class="a">160~250</p><p class="v">205</p><svg class="y"><use href="#y"/></svg><svg class="m"><use href="#m"/></svg><p class="c">0</p><p class="u">元/片</p><p class="d">04-01</p><svg class="k"><use href="#k"/></svg></div>
<div class="r" style="height:68px"><p class="n">4寸砷化镓衬底</p><p class="a">180~400</p><p class="v">290</p><svg class="y"><use href="#y"/></svg><svg class="m"><use href="#m"/></svg><p class="c">0</p><p class="u">元/片</p><p class="d">04-01</p><svg class="k"><use href="#k"/></svg></div>
<div class="r g" style="height:68px"><p class="n">6寸砷化镓衬底</p><p class="a">660~1160</p><p class="v">910</p><svg class="y"><use href="#y"/></svg><svg class="m"><use href="#m"/></svg><p class="c">0</p><p class="u">元/片</p><p class="d">04-01</p><svg class="k"><use href="#k"/></svg></div>
</div>
</body></html>
